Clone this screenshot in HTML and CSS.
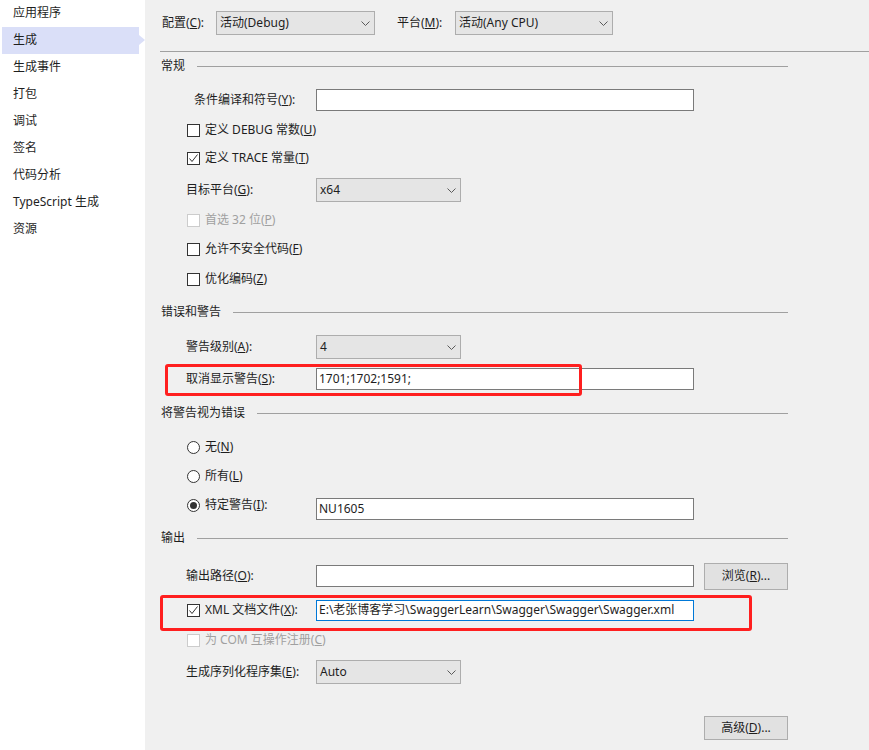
FILE: index.html
```html
<!DOCTYPE html>
<html lang="zh-CN">
<head>
<meta charset="utf-8">
<title>生成</title>
<link rel="stylesheet" href="styles.css">
</head>
<body>
<div class="app">
  <nav class="side">
    <div class="nav-item">应用程序</div>
    <div class="nav-item active">生成</div>
    <div class="nav-item">生成事件</div>
    <div class="nav-item">打包</div>
    <div class="nav-item">调试</div>
    <div class="nav-item">签名</div>
    <div class="nav-item">代码分析</div>
    <div class="nav-item">TypeScript 生成</div>
    <div class="nav-item">资源</div>
  </nav>
  <main class="main">
    <div class="topbar">
      <span class="top-label cfg">配置(<u>C</u>):</span>
      <div class="combo combo-top1"><span class="combo-text">活动(Debug)</span><svg class="chev" width="9" height="5" viewBox="0 0 9 5"><polyline points="0.5,0.5 4.5,4.5 8.5,0.5" fill="none" stroke="#5a5a5a" stroke-width="1"/></svg></div>
      <span class="top-label plat">平台(<u>M</u>):</span>
      <div class="combo combo-top2"><span class="combo-text">活动(Any CPU)</span><svg class="chev" width="9" height="5" viewBox="0 0 9 5"><polyline points="0.5,0.5 4.5,4.5 8.5,0.5" fill="none" stroke="#5a5a5a" stroke-width="1"/></svg></div>
    </div>
    <div class="top-rule"></div>

    <div class="content">
      <div class="head mt2"><span class="head-text">常规</span><i class="rule"></i></div>

      <div class="row mt10"><span class="lbl lbl-cond">条件编译和符号(<u>Y</u>):</span><div class="input"></div></div>

      <div class="row check-row mt6"><span class="box"></span><span>定义 DEBUG 常数(<u>U</u>)</span></div>
      <div class="row check-row mt4"><span class="box"><svg width="11" height="11" viewBox="0 0 11 11"><polyline points="1.5,5.5 4,8.5 9.5,1.5" fill="none" stroke="#333" stroke-width="1"/></svg></span><span>定义 TRACE 常量(<u>T</u>)</span></div>

      <div class="row mt8"><span class="lbl">目标平台(<u>G</u>):</span><div class="combo combo-sm"><span class="combo-text">x64</span><svg class="chev" width="9" height="5" viewBox="0 0 9 5"><polyline points="0.5,0.5 4.5,4.5 8.5,0.5" fill="none" stroke="#5a5a5a" stroke-width="1"/></svg></div></div>

      <div class="row check-row disabled mt6"><span class="box"></span><span>首选 32 位(<u>P</u>)</span></div>
      <div class="row check-row mt5"><span class="box"></span><span>允许不安全代码(<u>F</u>)</span></div>
      <div class="row check-row mt6"><span class="box"></span><span>优化编码(<u>Z</u>)</span></div>

      <div class="head mt9"><span class="head-text">错误和警告</span><i class="rule"></i></div>

      <div class="row mt11"><span class="lbl">警告级别(<u>A</u>):</span><div class="combo combo-sm"><span class="combo-text">4</span><svg class="chev" width="9" height="5" viewBox="0 0 9 5"><polyline points="0.5,0.5 4.5,4.5 8.5,0.5" fill="none" stroke="#5a5a5a" stroke-width="1"/></svg></div></div>

      <div class="row mt8 marked"><span class="lbl">取消显示警告(<u>S</u>):</span><div class="input">1701;1702;1591;</div><span class="mark mark-warn"></span></div>

      <div class="head mt10"><span class="head-text">将警告视为错误</span><i class="rule"></i></div>

      <div class="row check-row mt10"><span class="radio"></span><span>无(<u>N</u>)</span></div>
      <div class="row check-row mt5"><span class="radio"></span><span>所有(<u>L</u>)</span></div>
      <div class="row check-row mt9"><span class="opt opt-up"><span class="radio on"></span><span>特定警告(<u>I</u>):</span></span><div class="input">NU1605</div></div>

      <div class="head mt5"><span class="head-text">输出</span><i class="rule"></i></div>

      <div class="row mt14"><span class="lbl">输出路径(<u>O</u>):</span><div class="input"></div><div class="btn btn-browse">浏览(<u>R</u>)...</div></div>

      <div class="row check-row mt10 marked"><span class="opt"><span class="box"><svg width="11" height="11" viewBox="0 0 11 11"><polyline points="1.5,5.5 4,8.5 9.5,1.5" fill="none" stroke="#333" stroke-width="1"/></svg></span><span>XML 文档文件(<u>X</u>):</span></span><div class="input input-focus">E:\老张博客学习\SwaggerLearn\Swagger\Swagger\Swagger.xml</div><span class="mark mark-xml"></span></div>

      <div class="row check-row disabled mt6"><span class="box"></span><span>为 COM 互操作注册(<u>C</u>)</span></div>

      <div class="row mt8"><span class="lbl">生成序列化程序集(<u>E</u>):</span><div class="combo combo-sm"><span class="combo-text">Auto</span><svg class="chev" width="9" height="5" viewBox="0 0 9 5"><polyline points="0.5,0.5 4.5,4.5 8.5,0.5" fill="none" stroke="#5a5a5a" stroke-width="1"/></svg></div></div>

      <div class="row row-end mt32"><div class="btn btn-adv">高级(<u>D</u>)...</div></div>
    </div>
  </main>
</div>
</body>
</html>
```

FILE: styles.css
```css
* { box-sizing: border-box; }
html, body { margin: 0; padding: 0; }
body {
  font-family: "Noto Sans", "Noto Sans CJK SC", sans-serif;
  font-size: 12px;
  line-height: 16px;
  color: #1e1e1e;
  background: #f0f0f0;
}
u { text-decoration: underline; text-underline-offset: 1px; }

.app { display: flex; width: 869px; height: 750px; overflow: hidden; }

.side {
  width: 145px;
  flex: none;
  background: #ffffff;
  height: 750px;
}
.nav-item {
  height: 26.9px;
  display: flex;
  align-items: center;
  margin-left: 2px;
  width: 137px;
  padding-left: 11px;
  white-space: nowrap;
  position: relative;
}
.nav-item.active { background: #dadff8; }
.nav-item.active::after {
  content: "";
  position: absolute;
  right: -6px;
  top: 50%;
  margin-top: -5px;
  border-left: 6px solid #dadff8;
  border-top: 5px solid transparent;
  border-bottom: 5px solid transparent;
}

.main { flex: 1; padding-left: 15px; background: #f0f0f0; }

.topbar {
  display: flex;
  align-items: center;
  height: 24px;
  margin-top: 11px;
  padding-left: 2px;
}
.top-label { white-space: nowrap; }
.cfg { width: 54px; }
.plat { width: 58px; margin-left: 22px; }
.combo {
  display: flex;
  align-items: center;
  height: 24px;
  background: #e5e5e5;
  border: 1px solid #adadad;
  padding: 0 4px 0 3px;
  white-space: nowrap;
}
.combo-text { flex: 1; }
.chev { flex: none; }
.combo-top1 { width: 159px; }
.combo-top2 { width: 158px; }
.combo-sm { width: 145px; }

.top-rule { height: 1px; background: #a0a0a0; margin-top: 16px; }

.content { padding-right: 81px; }

.head { display: flex; align-items: center; height: 24px; padding-left: 1px; }
.head-text { white-space: nowrap; }
.rule { flex: 1; height: 1px; background: #a0a0a0; margin-left: 12px; }

.row {
  display: flex;
  align-items: center;
  height: 24px;
  padding-left: 26px;
  white-space: nowrap;
}
.row.marked { position: relative; }
.lbl { width: 130px; flex: none; }
.lbl-cond { padding-left: 8px; }

.input {
  width: 378px;
  height: 22px;
  background: #ffffff;
  border: 1px solid #7a7a7a;
  padding: 0 2px;
  display: flex;
  align-items: center;
  flex: none;
}
.input-focus { border-color: #0078d7; height: 21px; }

.check-row { padding-left: 27px; }
.check-row > .box, .check-row > .radio { margin-right: 5px; }
.box {
  width: 13px;
  height: 13px;
  border: 1px solid #333333;
  background: #ffffff;
  flex: none;
  display: flex;
  align-items: center;
  justify-content: center;
}
.radio {
  width: 13px;
  height: 13px;
  border: 1px solid #333333;
  border-radius: 50%;
  background: #ffffff;
  flex: none;
  display: flex;
  align-items: center;
  justify-content: center;
}
.radio.on::before {
  content: "";
  width: 7px;
  height: 7px;
  border-radius: 50%;
  background: #333333;
}
.opt { width: 129px; flex: none; display: flex; align-items: center; gap: 5px; }
.opt-up { margin-bottom: 8px; }

.disabled { color: #a0a0a0; }
.disabled .box { border-color: #cccccc; background: #ffffff; }

.btn {
  height: 27px;
  width: 84px;
  background: #e1e1e1;
  border: 1px solid #adadad;
  display: flex;
  align-items: center;
  justify-content: center;
  flex: none;
}
.btn-browse { margin-left: 10px; }
.btn-adv { height: 24px; }
.row-end { justify-content: flex-end; }

.mark {
  position: absolute;
  border: 3px solid #ff1f1f;
  border-radius: 3px;
  pointer-events: none;
}
.mark-warn { left: 5px; top: -3px; width: 417px; height: 32px; }
.mark-xml { left: 0; top: -3px; width: 592px; height: 36px; }

.mt2 { margin-top: 2px; }
.mt4 { margin-top: 4px; }
.mt5 { margin-top: 5px; }
.mt6 { margin-top: 6px; }
.mt8 { margin-top: 8px; }
.mt9 { margin-top: 9px; }
.mt10 { margin-top: 10px; }
.mt11 { margin-top: 11px; }
.mt14 { margin-top: 14px; }
.mt32 { margin-top: 32px; }
```
